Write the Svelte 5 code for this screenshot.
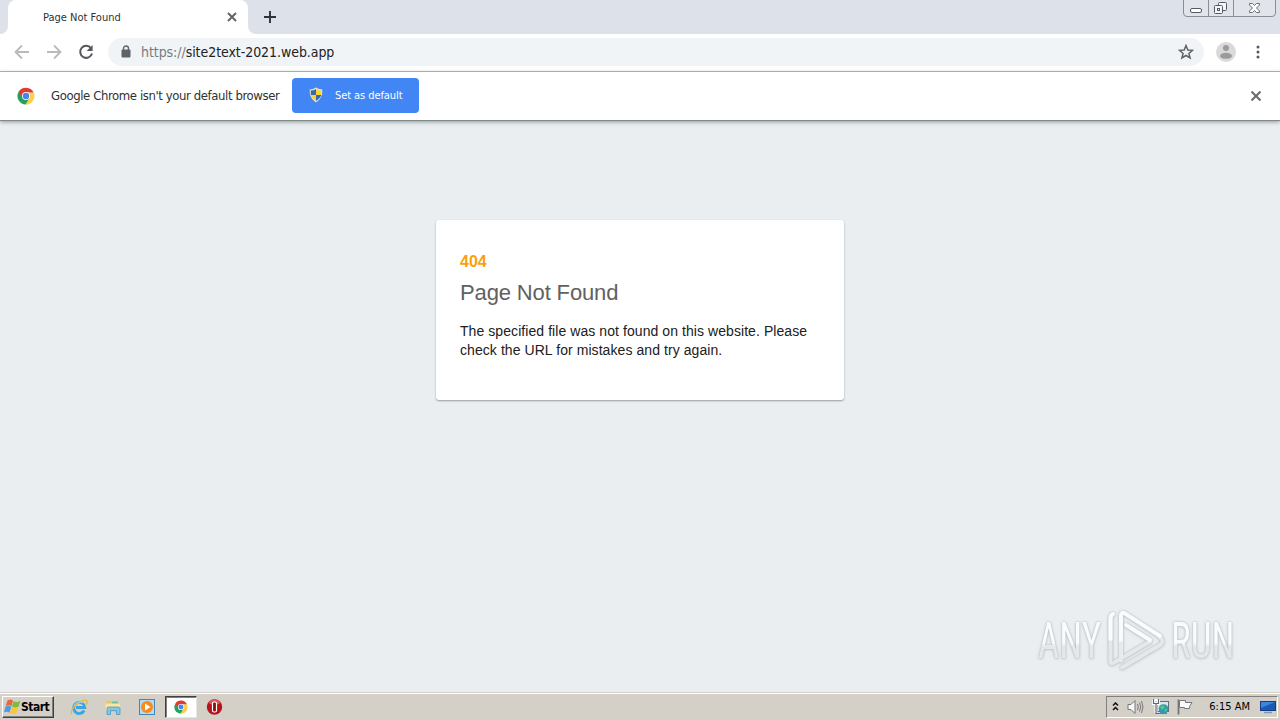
<script>
    let tabTitle = "Page Not Found"
    let message = ["The specified file was not found on this website. Please", "check the URL for mistakes and try again."]
    let clock = "6:15 AM"
</script>

{#snippet chromeLogo(size)}
    <svg width={size} height={size} viewBox="0 0 18 18">
        <path d="M9 9H16.800A8.200 8.200 0 0 1 8.500 17.500L6 12Z" fill="#fcd04b" />
        <path d="M16.700 5.500A8.500 8.500 0 0 1 8.500 17.500L12.700 11 11 5.500Z" fill="#fcd04b" />
        <path d="M1.600 4.700A8.500 8.500 0 0 0 8.500 17.500L12.500 11 6 10Z" fill="#24a15a" />
        <path d="M1.600 4.800A8.500 8.500 0 0 1 16.600 5.500H9L5.500 11Z" fill="#e23b2e" />
        <circle cx="9" cy="9" r="4" fill="#fff" />
        <circle cx="9" cy="9" r="3.200" fill="#4285f4" />
    </svg>
{/snippet}

<main class="screen">
    <!-- Tab strip -->
    <header class="tabs">
        <div class="edge"></div>
        <div class="tab">
            <span class="tabTitle">{tabTitle}</span>
            <svg class="tabClose" width="10" height="10" viewBox="0 0 10 10"><path d="M1 1 9 9M9 1 1 9" stroke="#5f6368" stroke-width="1.9" /></svg>
        </div>
        <div class="rest">
            <svg width="12" height="12" viewBox="0 0 12 12"><path d="M6 0V12M0 6H12" stroke="#303338" stroke-width="1.9" /></svg>
        </div>
        <svg class="windowButtons" width="94" height="18" viewBox="0 0 94 18" fill="none">
            <path d="M.5 0V13Q.5 16.500 4 16.500H89Q92.500 16.500 92.500 13V0" fill="#e1e4ea" stroke="#888d96" />
            <path d="M25.500 0V16M50.500 0V16" stroke="#888d96" />
            <rect x="7.500" y="8.500" width="11" height="4" rx="1.500" fill="#fff" stroke="#555b65" />
            <rect x="35.500" y="2.500" width="8" height="8" rx="1" fill="#f5f6f8" stroke="#555b65" />
            <rect x="31.500" y="5.500" width="8" height="8" rx="1" fill="#f5f6f8" stroke="#555b65" />
            <rect x="34.500" y="8.500" width="2" height="2" stroke="#555b65" />
            <path d="M66.500 3.500H69.500L71.500 5.500 73.500 3.500H76.500V5L73.500 8 76.500 11V12.500H73.500L71.500 10.500 69.500 12.500H66.500V11L69.500 8 66.500 5Z" fill="#fff" stroke="#686d76" />
        </svg>
    </header>

    <!-- Address bar -->
    <nav class="toolbar">
        <div class="navIcons">
            <svg width="16" height="16" viewBox="0 0 16 16" fill="none" stroke="#b8babd" stroke-width="1.8"><path d="M15 8H2M8 1.500 1.500 8 8 14.500" /></svg>
            <svg width="16" height="16" viewBox="0 0 16 16" fill="none" stroke="#b8babd" stroke-width="1.8"><path d="M1 8H14M8 1.500 14.500 8 8 14.500" /></svg>
            <svg width="16" height="16" viewBox="0 0 16 16"><path d="M13 4.200A6 6 0 1 0 14 9.500" fill="none" stroke="#55585d" stroke-width="2" /><path d="M14.600 1V7H8.600Z" fill="#55585d" /></svg>
        </div>
        <div class="address">
            <svg class="lock" width="10" height="13" viewBox="0 0 10 13"><path d="M2.500 6V3.500a2.500 2.500 0 0 1 5 0V6" fill="none" stroke="#5f6368" stroke-width="1.400" /><rect x=".5" y="4.500" width="9" height="8" rx="1" fill="#5f6368" /></svg>
            <span class="url"><span class="scheme">https://</span>site2text-2021.web.app</span>
            <svg class="star" width="16" height="16" viewBox="0 0 16 16"><path d="M8 1.500 9.800 6 14.600 6.300 10.900 9.400 12.100 14 8 11.500 3.900 14 5.100 9.400 1.400 6.300 6.200 6Z" fill="none" stroke="#5f6368" stroke-width="1.500" /></svg>
        </div>
        <svg class="avatar" width="20" height="20" viewBox="0 0 20 20"><circle cx="10" cy="10" r="10" fill="#dadada" /><circle cx="10" cy="6" r="3" fill="#9b9b9b" /><ellipse cx="10" cy="13.800" rx="6" ry="3" fill="#9b9b9b" /></svg>
        <svg class="menu" width="4" height="14" viewBox="0 0 4 14" fill="#55585d"><circle cx="2" cy="2" r="1.500" /><circle cx="2" cy="7" r="1.500" /><circle cx="2" cy="12" r="1.500" /></svg>
    </nav>

    <!-- Default browser bar -->
    <div class="infobar">
        {@render chromeLogo(18)}
        <span class="infoText">Google Chrome isn't your default browser</span>
        <button>
            <svg width="14" height="16" viewBox="0 0 14 16">
                <path d="M7 .5Q10 2.500 13.300 2.500 14 11 7 15.500 0 11 .7 2.500 4 2.500 7 .5Z" fill="#e8e4c8" />
                <path d="M7 2V8H1.800V3.600Q5 3.600 7 2Z" fill="#3268b4" />
                <path d="M7 2V8H12.200V3.600Q9 3.600 7 2ZM1.800 8H7V14Q2.500 11 1.800 8Z" fill="#fbd52b" />
                <path d="M7 8H12.200Q11.500 11 7 14Z" fill="#3268b4" />
            </svg>
            <span>Set as default</span>
        </button>
        <svg class="infoClose" width="10" height="10" viewBox="0 0 10 10"><path d="M.5 .5 9.500 9.500M9.500 .5 .5 9.500" stroke="#696969" stroke-width="2" /></svg>
    </div>

    <section class="page">
        <div class="card">
            <h2>404</h2>
            <h1>Page Not Found</h1>
            <p>{#each message as line}<span>{line}</span>{/each}</p>
        </div>
        <div class="watermark">
            <span>ANY</span>
            <svg width="64" height="72" viewBox="76 2 64 72" fill="none" stroke-linecap="round" stroke-linejoin="round">
                <path d="M84 11Q81.500 12 81.500 16V58Q82 62 86 59L121 38.500" stroke="#e5e8eb" stroke-width="4" />
                <path d="M93 64.500 131 42Q136 38 131 34.500" stroke="#e5e8eb" stroke-width="4" />
                <path d="M92 57V14Q92 8 96 10.500L131 33" stroke="#fafbfc" stroke-width="4" />
                <path d="M84 11Q81.500 12 81.500 16V36M97 22 121 37" stroke="#fafbfc" stroke-width="4" />
                <path d="M92 40V57" stroke="#e8ebee" stroke-width="4" />
            </svg>
            <span>RUN</span>
        </div>
    </section>

    <!-- Taskbar -->
    <footer class="taskbar">
        <div class="start">
            <svg width="17" height="16" viewBox="0 0 17 16">
                <path d="M3.500 1.500Q6.500 -.5 9 1.500L7.500 7.200Q5 5.500 1.700 7Z" fill="#ed6540" />
                <path d="M9.500 2Q13 4 16.500 1.700L14.500 7.700Q11 9.300 8 7.500Z" fill="#7abd42" />
                <path d="M1.500 7.500Q5 6 7.200 7.700L5.500 13.700Q3 12 0 13.300Z" fill="#4c9dda" />
                <path d="M7.700 8Q11 10 14.300 8.300L12.500 14Q9 16 6.100 14Z" fill="#f7c43a" />
            </svg>
            <span>Start</span>
        </div>
        <div class="apps">
            <div class="app">
                <svg width="18" height="18" viewBox="0 0 18 18" fill="none">
                    <path d="M14.200 12.500A5.600 5.600 0 1 1 14.800 9.500H6" stroke="#3ba5e4" stroke-width="2.800" />
                    <path d="M2 16C-2 12 12 .5 16.500 2.500 18 3.500 16.500 6 15.500 7" stroke="#e9b936" stroke-width="1.300" />
                    <path d="M4 8A6 6 0 0 1 13 5" stroke="#9bdcfb" />
                </svg>
            </div>
            <div class="app">
                <svg width="18" height="18" viewBox="0 0 18 18">
                    <path d="M2 3H7L8 5H16V14H2Z" fill="#e8c65e" /><path d="M8 3.500H14V6H8Z" fill="#6cc38b" />
                    <path d="M1.500 5.500H16V13H2Z" fill="#fbe69c" />
                    <path d="M3 10.500Q3 9 4.500 9H14.500Q16 9 16 10.500V16.500H12.500V12.500H6.500V16.500H3Z" fill="#7ac8ee" stroke="#418fbd" stroke-width=".7" />
                </svg>
            </div>
            <div class="app">
                <svg width="18" height="18" viewBox="0 0 18 18">
                    <rect x="1.500" y="1.500" width="15" height="15" fill="#b6d9f2" stroke="#4585b8" />
                    <circle cx="9" cy="9" r="6" fill="#f68b1f" /><path d="M7 5.500 12.500 9 7 12.500Z" fill="#fff" />
                </svg>
            </div>
            <div class="app active">{@render chromeLogo(14)}</div>
            <div class="app">
                <svg width="18" height="18" viewBox="0 0 18 18"><circle cx="8.500" cy="9" r="7.700" fill="#b7131a" /><path d="M2.500 5A7 7 0 0 1 14.500 5Q8.500 8 2.500 5Z" fill="#e4575a" /><rect x="6.500" y="4" width="4" height="10" rx="1.500" fill="#861014" stroke="#fff" stroke-width="1.200" /></svg>
            </div>
        </div>
        <div class="tray">
            <svg width="7" height="9" viewBox="0 0 7 9" fill="none" stroke="#111" stroke-width="1.500"><path d="M1 3.500 3.500 1 6 3.500M1 8 3.500 5.500 6 8" /></svg>
            <svg width="17" height="16" viewBox="0 0 17 16" fill="none" stroke="#77777c"><path d="M1 5.500H4L8 1.500V14.500L4 10.500H1Z" fill="#f8f8f8" /><path d="M10.500 5Q12 8 10.500 11M12.500 3.500Q15 8 12.500 12.500M14.500 2Q17.500 8 14.500 14" /></svg>
            <svg width="17" height="17" viewBox="0 0 17 17"><rect x="5.500" y="3.500" width="11" height="10" fill="#dbe8ed" stroke="#5c7180" /><path d="M5 15.500H15" stroke="#6f7f8a" /><path d="M1.500 1.500V5.500H6.500V1.500M4 1V3M4 6V15" fill="none" stroke="#fff" stroke-width="3" /><path d="M1.500 1V5.500H6.500V1M4 5V15.500H7" fill="none" stroke="#65676a" stroke-width="1.200" /><circle cx="11.500" cy="11" r="4.800" fill="#2c9ab0" /><path d="M8 9Q11 6 13 9L10 12ZM12 12 15 10 14 14Z" fill="#66c578" /></svg>
            <svg width="17" height="16" viewBox="0 0 17 16"><path d="M1.500 .5V15.500" stroke="#74767a" stroke-width="1.800" /><path d="M2.500 1.500H8.500V3.500H15L13 6.500 12.500 9.500H7.500V8.500H2.500Z" fill="#fafafa" stroke="#74767a" /></svg>
            <span>{clock}</span>
            <svg class="desktop" width="16" height="14" viewBox="0 0 16 14"><rect x=".5" y="1.500" width="15" height="9" fill="#1c59b5" stroke="#153d80" /><path d="M1 2H15L1 8Z" fill="#3d86df" /><path d="M4 12.500H12" stroke="#7999b7" stroke-width="1.500" /></svg>
        </div>
    </footer>
</main>

<style>
    :global(body) {
        margin: 0;
        overflow: hidden;
    }
    .screen {
        width: 1280px;
        height: 720px;
        display: flex;
        flex-direction: column;
        font-family: "DejaVu Sans Condensed", "DejaVu Sans", sans-serif;
        font-stretch: condensed;
        white-space: nowrap;
        color: #303135;
    }
    svg {
        display: block;
        flex: none;
    }
    .tabs {
        height: 34px;
        display: flex;
        background: #fff;
        flex: none;
        position: relative;
    }
    .edge {
        width: 8px;
        background: #dde1e9;
        border-bottom-right-radius: 8px;
    }
    .tab {
        width: 240px;
        box-sizing: border-box;
        padding: 0 11px 0 35px;
        display: flex;
        align-items: center;
        justify-content: space-between;
        background: linear-gradient(#dde1e9 0 12px, #fff 12px);
    }
    .tab::before {
        content: "";
        position: absolute;
        left: 8px;
        top: 0;
        width: 240px;
        height: 34px;
        background: #fff;
        border-radius: 8px 8px 0 0;
    }
    .tabTitle, .tabClose {
        position: relative;
    }
    .tabTitle {
        font-size: 11px;
    }
    .rest {
        flex: 1;
        background: #dde1e9;
        border-bottom-left-radius: 8px;
        display: flex;
        align-items: center;
        padding-left: 16px;
    }
    .windowButtons {
        position: absolute;
        right: 3px;
        top: 0;
    }
    .toolbar {
        height: 37px;
        flex: none;
        display: flex;
        align-items: center;
        border-bottom: 1px solid #b2b4b5;
        background: #fff;
    }
    .navIcons {
        display: flex;
        gap: 16px;
        padding: 0 14px 1px;
    }
    .address {
        width: 1096px;
        height: 28px;
        box-sizing: border-box;
        border-radius: 14px;
        background: #f1f4f7;
        display: flex;
        align-items: center;
        padding: 0 10px 1px 13px;
        margin-bottom: 1px;
    }
    .url {
        margin-left: 10px;
        font-size: 14px;
        letter-spacing: -0.06px;
        color: #202124;
    }
    .scheme {
        color: #777b80;
    }
    .star {
        margin-left: auto;
    }
    .avatar {
        margin: 0 0 1px 12px;
    }
    .menu {
        margin: 0 0 1px 20px;
    }
    .infobar {
        height: 48px;
        flex: none;
        display: flex;
        align-items: center;
        padding: 0 19px 0 17px;
        background: #fff;
        border-bottom: 1px solid #838888;
        box-shadow: 0 1px 4px #8f9898;
        position: relative;
        z-index: 1;
    }
    .infoText {
        width: 228px;
        margin: 0 13px 2px 16px;
        font-size: 13px;
        letter-spacing: -0.4px;
    }
    button {
        width: 127px;
        height: 35px;
        border: 0;
        border-radius: 4px;
        padding: 0 0 0 17px;
        margin: 0 0 2px;
        background: #4285f4;
        color: #fff;
        font: inherit;
        font-size: 11px;
        letter-spacing: -0.08px;
        display: flex;
        align-items: center;
        gap: 12px;
    }
    .infoClose {
        margin-left: auto;
    }
    .page {
        height: 571px;
        flex: none;
        background: #eaeef1;
        display: flex;
        justify-content: center;
        align-items: flex-start;
        position: relative;
        font-family: "Liberation Sans", Arial, sans-serif;
    }
    .card {
        width: 360px;
        height: 116px;
        margin-top: 99px;
        padding: 32px 24px;
        background: #fff;
        border-radius: 3px;
        box-shadow: 0 1px 2px rgba(0, 0, 0, 0.35);
    }
    h2 {
        margin: 0 0 8px;
        font-size: 16px;
        line-height: 19px;
        color: #fca009;
    }
    h1 {
        margin: 0 0 16px;
        font-size: 22px;
        line-height: 27px;
        font-weight: 400;
        letter-spacing: -0.14px;
        color: #616161;
    }
    p {
        margin: 0;
        font-size: 14px;
        line-height: 19px;
        letter-spacing: 0.07px;
        color: #202020;
    }
    p span {
        display: block;
    }
    /* Half-transparent logo over the corner of the page */
    .watermark {
        position: absolute;
        left: 1038px;
        top: 484px;
        width: 196px;
        height: 72px;
        display: flex;
        align-items: center;
        gap: 2px;
        filter: drop-shadow(0 0 1px #b0b6ba) drop-shadow(0 1px 1px #d3d7da);
    }
    .watermark span {
        width: 96px;
        margin-right: -31px;
        padding-bottom: 1px;
        font-family: Roboto, sans-serif;
        font-size: 50px;
        line-height: 60px;
        color: transparent;
        background: linear-gradient(#fafbfc 52%, #e5e8eb 58%);
        background-clip: text;
        transform: scaleX(0.74);
        transform-origin: left;
        flex: none;
    }
    .taskbar {
        height: 28px;
        flex: none;
        box-sizing: border-box;
        border-top: 1px solid #d4d0c8;
        box-shadow: inset 0 1px #fff;
        background: #d4d0c8;
        display: flex;
        align-items: center;
        padding: 1px 2px 0;
        color: #000;
    }
    .start {
        width: 52px;
        height: 22px;
        box-sizing: border-box;
        border: 1px solid;
        border-color: #fff #404040 #404040 #fff;
        box-shadow: inset -1px -1px #808080;
        display: flex;
        align-items: center;
        padding: 0 0 1px 1px;
        font-size: 12px;
        font-weight: 700;
        letter-spacing: -0.5px;
    }
    .apps {
        display: flex;
        gap: 2px;
        margin-left: 9px;
    }
    .app {
        width: 32px;
        height: 22px;
        box-sizing: border-box;
        display: flex;
        align-items: center;
        justify-content: center;
    }
    .active {
        background: #fff;
        border: 1px solid;
        border-color: #404040 #e8e6e0 #e8e6e0 #404040;
        box-shadow: inset 1px 1px #808080;
    }
    .tray {
        width: 172px;
        height: 22px;
        box-sizing: border-box;
        margin-left: auto;
        padding: 0 1px 1px 5px;
        border: 1px solid;
        border-color: #808080 #fff #fff #808080;
        display: flex;
        align-items: center;
        gap: 8px;
        font-size: 11px;
    }
    .tray span {
        margin-left: auto;
    }
    .desktop {
        margin-left: 2px;
    }
</style>
